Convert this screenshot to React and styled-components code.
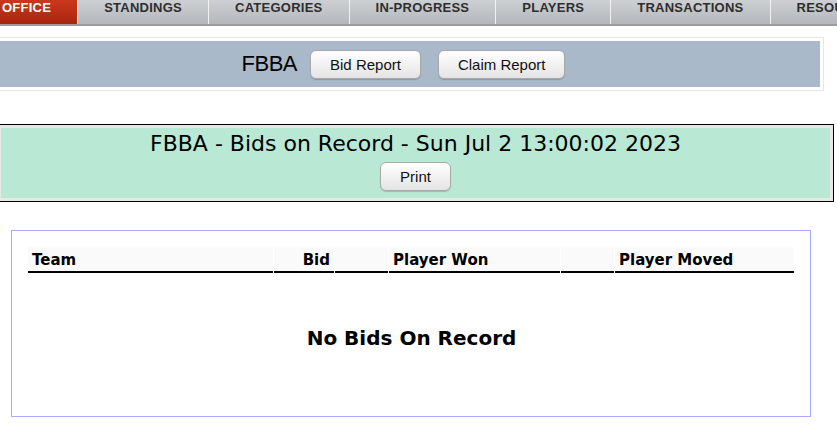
import React from "react";
import styled, { createGlobalStyle } from "styled-components";

const GlobalStyle = createGlobalStyle`
  body {
    margin: 0;
    background: #ffffff;
    overflow: hidden;
  }
`;

const tabs = ["OFFICE", "STANDINGS", "CATEGORIES", "IN-PROGRESS", "PLAYERS", "TRANSACTIONS", "RESOURCES"];

const columns = [
  { label: "Team", width: 245, align: "left" },
  { label: "Bid", width: 60, align: "right" },
  { label: "", width: 53, align: "left" },
  { label: "Player Won", width: 171, align: "left" },
  { label: "", width: 53, align: "left" },
  { label: "Player Moved", width: 179, align: "left" },
];

const App = () => {
  return (
    <Page>
      <GlobalStyle />
      <NavBar>
        {tabs.map((t, i) => (
          <Tab key={t} active={i === 0} first={i === 0}>
            {t}
          </Tab>
        ))}
      </NavBar>

      <ControlBox>
        <ControlBar>
          <LeagueName>FBBA</LeagueName>
          <ButtonRow>
            <Button>Bid Report</Button>
            <Button>Claim Report</Button>
          </ButtonRow>
        </ControlBar>
      </ControlBox>

      <HeadingBox>
        <Heading>
          <HeadingTitle>FBBA - Bids on Record - Sun Jul 2 13:00:02 2023</HeadingTitle>
          <Button>Print</Button>
        </Heading>
      </HeadingBox>

      <ReportBox>
        <BidTable>
          <colgroup>
            {columns.map((c, i) => (
              <col key={i} style={{ width: c.width }} />
            ))}
          </colgroup>
          <thead>
            <tr>
              {columns.map((c, i) => (
                <HeadCell key={i} align={c.align}>
                  {c.label}
                </HeadCell>
              ))}
            </tr>
          </thead>
        </BidTable>
        <EmptyMessage>No Bids On Record</EmptyMessage>
      </ReportBox>
    </Page>
  );
};

const Page = styled.div`
  display: flex;
  flex-direction: column;
  align-items: flex-start;
  width: 837px;
`;

const NavBar = styled.div`
  display: flex;
  margin-left: -24px;
  border-bottom: 2px solid #9c9c9c;
  white-space: nowrap;
`;

const Tab = styled.div`
  height: 24px;
  box-sizing: border-box;
  padding: 0 26px 8px;
  line-height: 16px;
  font-family: "Liberation Sans", Arial, sans-serif;
  font-size: 13px;
  font-weight: bold;
  letter-spacing: 0.25px;
  color: ${(p) => (p.active ? "#ffffff" : "#2e2e2e")};
  background: ${(p) =>
    p.active
      ? "linear-gradient(#c9381d, #a8250f)"
      : "linear-gradient(#cdd0d3, #b3b7bb)"};
  border-left: ${(p) => (p.first ? "none" : "1px solid #f2f2f2")};
`;

const ControlBox = styled.div`
  box-sizing: border-box;
  width: 841px;
  margin: 11px 0 0 -17px;
  padding: 3px;
  border: 1px solid #e6e6e6;
`;

const ControlBar = styled.div`
  height: 46px;
  display: flex;
  align-items: center;
  justify-content: center;
  background: #a9b9ca;
`;

const LeagueName = styled.span`
  font-family: "Liberation Sans", Arial, sans-serif;
  font-size: 22px;
  letter-spacing: -0.5px;
  color: #000000;
  margin-right: 13px;
`;

const ButtonRow = styled.div`
  display: flex;
  gap: 17px;
`;

const Button = styled.button`
  height: 29px;
  padding: 0 19px;
  border: 1px solid #a9a9a9;
  border-radius: 6px;
  background: linear-gradient(#ffffff, #e4e4e4);
  box-shadow: 0 1px 1px rgba(0, 0, 0, 0.18);
  font-family: "Liberation Sans", Arial, sans-serif;
  font-size: 15px;
  color: #111111;
  cursor: pointer;
`;

const HeadingBox = styled.div`
  box-sizing: border-box;
  width: 837px;
  margin: 33px 0 0 -3px;
  padding: 3px;
  border: 1px solid #000000;
  background: #e8e8e8;
`;

const Heading = styled.div`
  display: flex;
  flex-direction: column;
  align-items: center;
  gap: 6px;
  padding: 4px 0 7px;
  background: #b9e8d5;
`;

const HeadingTitle = styled.div`
  font-family: Verdana, "DejaVu Sans", sans-serif;
  font-size: 22px;
  line-height: 24px;
  color: #000000;
`;

const ReportBox = styled.div`
  box-sizing: border-box;
  width: 800px;
  margin: 28px 0 0 11px;
  padding: 16px 14px 66px 15px;
  border: 1px solid #aaaaff;
`;

const BidTable = styled.table`
  width: 768px;
  table-layout: fixed;
  border-collapse: separate;
  border-spacing: 1px 0;
`;

const HeadCell = styled.th`
  height: 26px;
  padding: 5px 4px 2px;
  box-sizing: border-box;
  background: #fafafa;
  border-bottom: 2px solid #000000;
  font-family: Verdana, "DejaVu Sans", sans-serif;
  font-size: 15px;
  line-height: 17px;
  font-weight: bold;
  text-align: ${(p) => p.align};
  color: #000000;
`;

const EmptyMessage = styled.div`
  margin-top: 53px;
  text-align: center;
  font-family: Verdana, "DejaVu Sans", sans-serif;
  font-size: 20px;
  line-height: 24px;
  font-weight: bold;
  color: #000000;
`;

export default App;
